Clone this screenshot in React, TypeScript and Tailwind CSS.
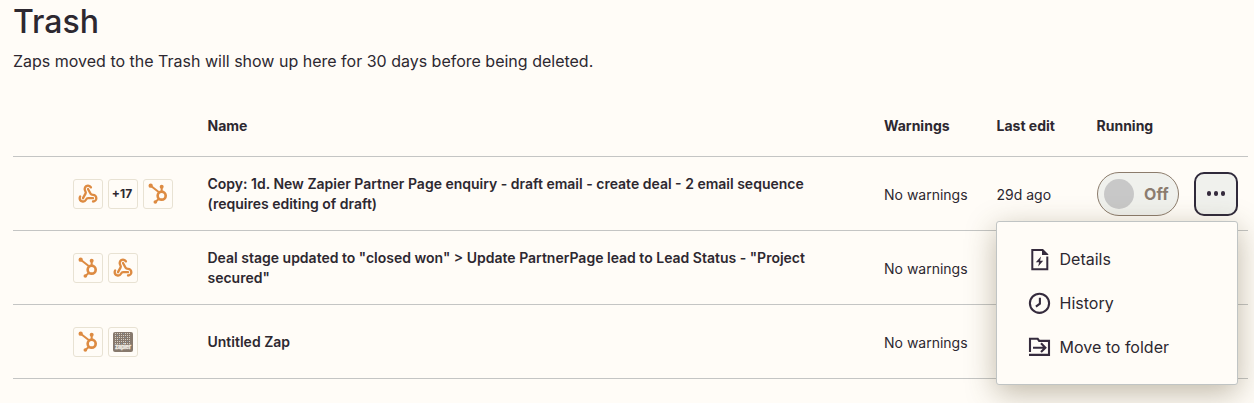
import type { ReactNode } from "react";

function Tile({ children }: { children: ReactNode }) {
  return (
    <div className="flex size-[30px] items-center justify-center rounded-[3px] border border-[#e8e2d3] bg-[#fffcf7]">
      {children}
    </div>
  );
}

function WebhookIcon() {
  return (
    <svg viewBox="0 0 24 24" className="size-5" fill="none" stroke="#dd8b42" strokeWidth="2.8" strokeLinecap="round" strokeLinejoin="round">
      <path d="M18 16.98h-5.99c-1.1 0-1.95.94-2.48 1.9A4 4 0 0 1 2 17c.01-.7.2-1.4.57-2" />
      <path d="m6 17 3.13-5.78c.53-.97.1-2.18-.5-3.1a4 4 0 1 1 6.89-4.06" />
      <path d="m12 6 3.13 5.73C15.66 12.7 16.9 13 18 13a4 4 0 0 1 0 8" />
    </svg>
  );
}

function HubspotIcon() {
  return (
    <svg viewBox="3 3 84 84" className="size-7" stroke="#dd8b42" fill="none">
      <circle cx="56" cy="50" r="12" strokeWidth="8" />
      <path d="M24 21 48 40M56 23V37M48 59 37 69" strokeWidth="6" />
      <g fill="#dd8b42" stroke="none">
        <circle cx="23" cy="20" r="6.5" />
        <circle cx="56" cy="23" r="6" />
        <circle cx="37" cy="69" r="5.5" />
      </g>
    </svg>
  );
}

function DottedAppIcon() {
  const cols = [0, 1, 2, 3, 4, 5, 6, 7];
  const rows = [0, 1, 2, 3, 4, 5];
  return (
    <svg viewBox="0 0 20 20" className="size-5">
      <rect width="20" height="20" rx="2" fill="#87796d" />
      {rows.map((r) =>
        cols.map((c) => (
          <rect
            key={`${r}-${c}`}
            x={2 + c * 2}
            y={1 + r * 2}
            width="1"
            height="1"
            fill={(r * 3 + c) % 7 === 4 ? "#8195a5" : "#d4cec3"}
          />
        )),
      )}
      <text x="10" y="16.8" textAnchor="middle" fontSize="5.5" fontWeight="800" fontFamily="Inter, sans-serif" fill="#eeeae2" stroke="#eeeae2" strokeWidth="0.3" textLength="16">
        zapier
      </text>
    </svg>
  );
}

function DetailsIcon() {
  return (
    <svg viewBox="0 0 24 24" className="size-6" fill="none">
      <path d="M15 3H4.3v19.2h15V9.5" stroke="#352b3d" strokeWidth="2" />
      <path d="M14 2h1l5.3 5.3V8H14z" fill="#352b3d" />
      <path d="M13 9.5 7.8 15.2h3.3l-.9 4.4 5-5.8h-3.1z" fill="#352b3d" />
    </svg>
  );
}

function HistoryIcon() {
  return (
    <svg viewBox="0 0 24 24" className="size-6" fill="none" stroke="#352b3d" strokeWidth="2.1">
      <circle cx="11.5" cy="12.3" r="9.6" />
      <path d="M11.9 6.8v5.9l-4 3" />
    </svg>
  );
}

function FolderIcon() {
  return (
    <svg viewBox="0 0 24 24" className="size-6" fill="none" stroke="#352b3d" strokeWidth="2.1">
      <path d="M2 17V3.8h7.7l1.5 2.1H21v14H1" />
      <path d="M5 12.7h12M13 8.3l4.4 4.4-4.4 4.4" />
    </svg>
  );
}

const COLUMNS = "grid grid-cols-[194.5px_676.5px_112.5px_100px_97.5px_1fr] items-center border-b border-[#c4c5c4]";

const rows = [
  {
    name: "Copy: 1d. New Zapier Partner Page enquiry - draft email - create deal - 2 email sequence (requires editing of draft)",
    icons: ["webhook", "more", "hubspot"],
  },
  {
    name: 'Deal stage updated to "closed won" > Update PartnerPage lead to Lead Status - "Project secured"',
    icons: ["hubspot", "webhook"],
  },
  { name: "Untitled Zap", icons: ["hubspot", "dotted"] },
];

function AppTile({ kind }: { kind: string }) {
  return (
    <Tile>
      {kind === "webhook" && <WebhookIcon />}
      {kind === "hubspot" && <HubspotIcon />}
      {kind === "dotted" && <DottedAppIcon />}
      {kind === "more" && <span className="pr-0.5 text-xs font-bold">+17</span>}
    </Tile>
  );
}

function ActionsMenu() {
  return (
    <div className="absolute top-[49px] right-0 flex h-[164px] w-[242px] flex-col rounded-[3px] border border-[#c0c4c4] bg-[#fffcf7] px-[31px] py-[15px] shadow-[0_8px_30px_rgba(90,76,40,0.38)]">
      {[
        { label: "Details", icon: <DetailsIcon /> },
        { label: "History", icon: <HistoryIcon /> },
        { label: "Move to folder", icon: <FolderIcon /> },
      ].map((item) => (
        <button key={item.label} className="flex h-11 items-center gap-[7.5px] text-left text-base whitespace-nowrap">
          {item.icon}
          {item.label}
        </button>
      ))}
    </div>
  );
}

export default function App() {
  return (
    <main className="h-[403px] overflow-hidden bg-[#fffcf7] pr-1.5 pl-[13px] font-['Inter',sans-serif] text-[#2d2830]">
      <h1 className="pt-0.5 text-[32px] leading-10 font-medium">Trash</h1>
      <p className="mt-[7px] text-base leading-6">
        Zaps moved to the Trash will show up here for 30 days before being deleted.
      </p>
      <section className="mt-[23px]">
        <div className={`${COLUMNS} h-[61px] text-sm font-bold`}>
          <span />
          <span>Name</span>
          <span>Warnings</span>
          <span>Last edit</span>
          <span>Running</span>
          <span />
        </div>
        {rows.map((row, index) => (
          <div key={row.name} className={`${COLUMNS} h-[74px] text-sm`}>
            <div className="flex gap-[5px] pl-[60px]">
              {row.icons.map((kind) => (
                <AppTile key={kind} kind={kind} />
              ))}
            </div>
            <div className="pr-16 leading-5 font-semibold">{row.name}</div>
            <div className="pt-0.5">No warnings</div>
            <div className="pt-0.5">29d ago</div>
            {index === 0 && (
              <>
                <div className="flex h-11 w-[82px] items-center justify-between rounded-full border border-[#8c7c6c] bg-[#f0f1ed] pr-[9px] pl-1.5">
                  <span className="size-[30px] rounded-full bg-[#c8c8c8]" />
                  <span className="text-base font-bold text-[#8c7c6f]">Off</span>
                </div>
                <div className="relative w-11">
                  <button className="flex size-11 items-center justify-center gap-[2.5px] rounded-[10px] border-2 border-[#302a3b] bg-[#f0f1ed]">
                    <i className="size-[4.5px] rounded-full bg-[#352b3d]" />
                    <i className="size-[4.5px] rounded-full bg-[#352b3d]" />
                    <i className="size-[4.5px] rounded-full bg-[#352b3d]" />
                  </button>
                  <ActionsMenu />
                </div>
              </>
            )}
          </div>
        ))}
      </section>
    </main>
  );
}
